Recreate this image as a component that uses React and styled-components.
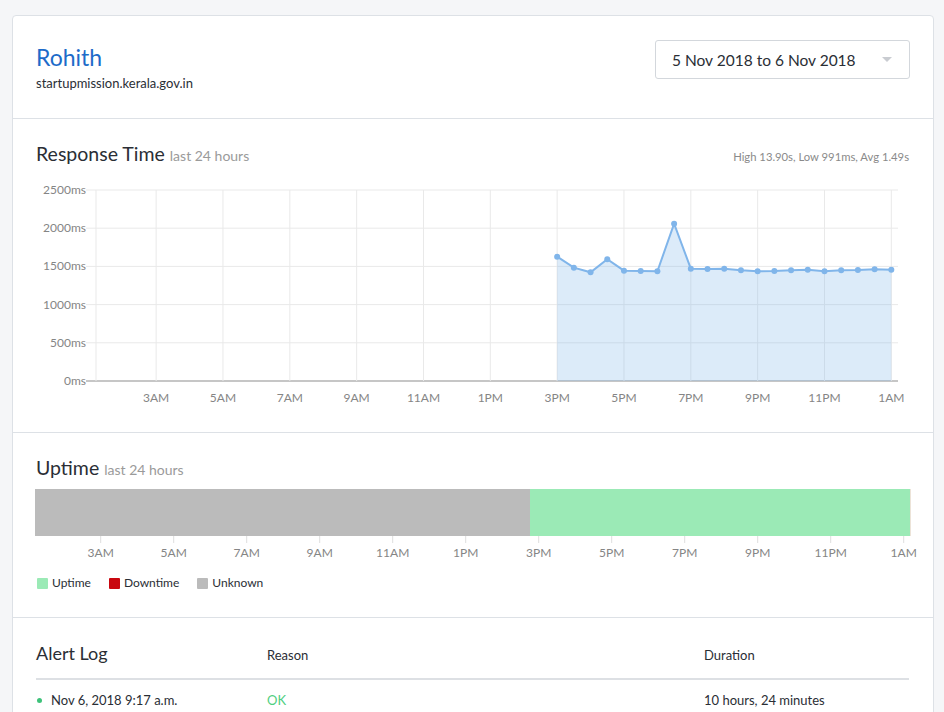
import React from "react";
import styled, { createGlobalStyle } from "styled-components";

const GlobalStyle = createGlobalStyle`
  html, body {
    margin: 0;
    padding: 0;
    background: #f5f6f8;
    font-family: Lato, "Open Sans", sans-serif;
    color: #2a2e35;
  }
  * { box-sizing: border-box; }
`;

// hours measured from 3AM; domain runs from -1.8h to 22.2h
const HOURS = [
  "3AM", "5AM", "7AM", "9AM", "11AM", "1PM",
  "3PM", "5PM", "7PM", "9PM", "11PM", "1AM",
];

const RESPONSE = [
  1627, 1483, 1423, 1593, 1444, 1440, 1436, 2059, 1470, 1466, 1470,
  1449, 1436, 1440, 1449, 1457, 1436, 1449, 1453, 1462, 1457,
];

const Y_TICKS = [2500, 2000, 1500, 1000, 500, 0];

const PLOT = { left: 61, right: 863, top: 9, bottom: 200 };
const hx = (h) =>
  PLOT.left + ((h + 1.8) / 24) * (PLOT.right - PLOT.left);
const vy = (v) =>
  PLOT.bottom - (v / 2500) * (PLOT.bottom - PLOT.top);

function ResponseChart() {
  const pts = RESPONSE.map((v, i) => [hx(12 + i * 0.5), vy(v)]);
  const line = pts.map((p, i) => `${i ? "L" : "M"}${p[0]},${p[1]}`).join(" ");
  const area = `${line} L${pts[pts.length - 1][0]},${PLOT.bottom} L${pts[0][0]},${PLOT.bottom} Z`;
  return (
    <svg width="875" height="230" style={{ display: "block", marginLeft: -1 }}>
      {Y_TICKS.map((t) => (
        <g key={t}>
          <line
            x1={PLOT.left - 10}
            x2={PLOT.right}
            y1={vy(t)}
            y2={vy(t)}
            stroke={t === 0 ? "#8d8d8d" : "#e9e9e9"}
          />
          <text
            x={PLOT.left - 10}
            y={vy(t) + 4}
            textAnchor="end"
            fontSize="12"
            fill="#858585"
          >
            {t}ms
          </text>
        </g>
      ))}
      <line x1={PLOT.left} x2={PLOT.left} y1={PLOT.top} y2={PLOT.bottom} stroke="#e9e9e9" />
      {HOURS.map((label, i) => (
        <g key={label}>
          <line x1={hx(i * 2)} x2={hx(i * 2)} y1={PLOT.top} y2={PLOT.bottom} stroke="#e9e9e9" />
          <text x={hx(i * 2)} y={221} textAnchor="middle" fontSize="12" fill="#858585">
            {label}
          </text>
        </g>
      ))}
      <path d={area} fill="rgba(127,181,234,0.27)" />
      <path d={line} fill="none" stroke="#80b5ea" strokeWidth="2" />
      {pts.map((p, i) => (
        <circle key={i} cx={p[0]} cy={p[1]} r="3" fill="#80b5ea" />
      ))}
    </svg>
  );
}

function UptimeAxis() {
  const w = 876;
  const x = (h) => ((h + 1.8) / 24) * w;
  return (
    <svg width={w} height="26" style={{ display: "block", overflow: "visible" }}>
      {HOURS.map((label, i) => (
        <g key={label}>
          <line x1={x(i * 2)} x2={x(i * 2)} y1="0" y2="7" stroke="#dedede" />
          <text x={x(i * 2)} y="21" textAnchor="middle" fontSize="12" fill="#858585">
            {label}
          </text>
        </g>
      ))}
    </svg>
  );
}

const UPTIME = [
  { kind: "unknown", share: 56.6 },
  { kind: "up", share: 43.4 },
];

const COLORS = {
  up: "#9beab6",
  down: "#c9070f",
  unknown: "#bbbbbb",
};

export default function App() {
  return (
    <>
      <GlobalStyle />
      <Page>
        <Card>
          <Header>
            <NameBlock>
              <SiteName>Rohith</SiteName>
              <SiteUrl>startupmission.kerala.gov.in</SiteUrl>
            </NameBlock>
            <DateSelect>
              <span>5 Nov 2018 to 6 Nov 2018</span>
              <Caret />
            </DateSelect>
          </Header>

          <Section $pad="24px 24px 21px 23px">
            <TitleRow>
              <Title>
                Response Time <Muted>last 24 hours</Muted>
              </Title>
              <Stats>High 13.90s, Low 991ms, Avg 1.49s</Stats>
            </TitleRow>
            <ResponseChart />
          </Section>

          <Section $pad="24px 22px 27px 22px">
            <Title $indent>
              Uptime <Muted>last 24 hours</Muted>
            </Title>
            <Bar>
              {UPTIME.map((s) => (
                <Segment key={s.kind} $color={COLORS[s.kind]} style={{ width: `${s.share}%` }} />
              ))}
            </Bar>
            <UptimeAxis />
            <Legend>
              <LegendItem><Swatch $color={COLORS.up} />Uptime</LegendItem>
              <LegendItem><Swatch $color={COLORS.down} />Downtime</LegendItem>
              <LegendItem><Swatch $color={COLORS.unknown} />Unknown</LegendItem>
            </Legend>
          </Section>

          <Section $pad="24px 24px 0 23px" $last>
            <LogHead>
              <LogTitle>Alert Log</LogTitle>
              <ColHead>Reason</ColHead>
              <ColHead>Duration</ColHead>
            </LogHead>
            <LogRow>
              <DateCell><Dot />Nov 6, 2018 9:17 a.m.</DateCell>
              <Reason>OK</Reason>
              <span>10 hours, 24 minutes</span>
            </LogRow>
          </Section>
        </Card>
      </Page>
    </>
  );
}

const Page = styled.div`
  padding: 15px 10px 0 12px;
`;

const Card = styled.div`
  background: #fff;
  border: 1px solid #dde1e6;
  border-radius: 4px;
`;

const Header = styled.div`
  display: flex;
  justify-content: space-between;
  align-items: flex-start;
  padding: 24px 23px 27px 23px;
  border-bottom: 1px solid #dde1e6;
`;

const NameBlock = styled.div`
  padding-top: 2px;
`;

const SiteName = styled.div`
  font-size: 23px;
  line-height: 30px;
  color: #1d6bc9;
`;

const SiteUrl = styled.div`
  font-size: 13px;
  line-height: 16px;
  margin-top: 3px;
  color: #2a2e35;
`;

const DateSelect = styled.div`
  width: 255px;
  height: 39px;
  border: 1px solid #d3d7dc;
  border-radius: 3px;
  display: flex;
  align-items: center;
  justify-content: space-between;
  padding: 0 17px 0 16px;
  font-size: 15.5px;
  color: #2a2e35;
`;

const Caret = styled.span`
  width: 0;
  height: 0;
  border-left: 5px solid transparent;
  border-right: 5px solid transparent;
  border-top: 5px solid #c9ccd1;
`;

const Section = styled.div`
  padding: ${(p) => p.$pad};
  border-bottom: ${(p) => (p.$last ? "none" : "1px solid #dde1e6")};
`;

const TitleRow = styled.div`
  display: flex;
  justify-content: space-between;
  align-items: baseline;
  margin-bottom: 14px;
`;

const Title = styled.div`
  font-size: 19.5px;
  line-height: 22px;
  color: #2a2e35;
  padding-left: ${(p) => (p.$indent ? "1px" : "0")};
`;

const Muted = styled.span`
  font-size: 14px;
  color: #9a9a9a;
`;

const Stats = styled.div`
  font-size: 11.25px;
  color: #8a8a8a;
`;

const Bar = styled.div`
  display: flex;
  height: 47px;
  margin-top: 8px;
  border-right: 1px solid #ece3d8;
`;

const Segment = styled.div`
  background: ${(p) => p.$color};
`;

const Legend = styled.div`
  display: flex;
  gap: 18px;
  margin-top: 14px;
  padding-left: 2px;
`;

const LegendItem = styled.div`
  display: flex;
  align-items: center;
  gap: 4px;
  font-size: 12px;
  line-height: 14px;
  color: #2a2e35;
`;

const Swatch = styled.span`
  width: 11px;
  height: 11px;
  border-radius: 1px;
  background: ${(p) => p.$color};
`;

const LogHead = styled.div`
  display: grid;
  grid-template-columns: 231px 437px 1fr;
  align-items: baseline;
  padding-bottom: 14px;
  border-bottom: 2px solid #dde0e4;
`;

const LogTitle = styled.div`
  font-size: 18px;
  line-height: 22px;
`;

const ColHead = styled.div`
  font-size: 13px;
`;

const LogRow = styled.div`
  display: grid;
  grid-template-columns: 231px 437px 1fr;
  align-items: center;
  padding: 11px 0;
  font-size: 13px;
  line-height: 18px;
`;

const DateCell = styled.div`
  display: flex;
  align-items: center;
  gap: 9px;
  padding-left: 1px;
`;

const Dot = styled.span`
  width: 5px;
  height: 5px;
  border-radius: 50%;
  background: #3ec27a;
`;

const Reason = styled.span`
  color: #4fcf7f;
`;
